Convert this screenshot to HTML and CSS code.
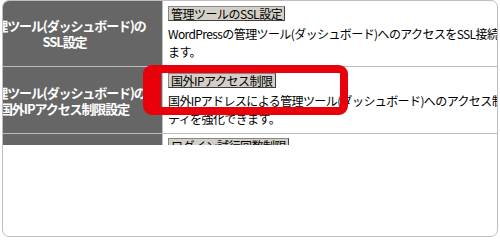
FILE: index.html
```html
<!DOCTYPE html>
<html lang="ja">
<head>
  <meta charset="UTF-8">
  <title>管理ツールのセキュリティ設定</title>
  <link rel="stylesheet" href="styles.css">
</head>
<body>
  <div class="frame">
    <div class="shot">
      <div class="settings">
        <div class="row row-ssl">
          <div class="label">管理ツール(ダッシュボード)の<br>SSL設定</div>
          <div class="field">
            <button type="button">管理ツールのSSL設定</button>
            <p>WordPressの管理ツール(ダッシュボード)へのアクセスをSSL接続にすることで、セキュリティを強化でき<br>ます。</p>
          </div>
        </div>
        <div class="row row-ip">
          <div class="label">管理ツール(ダッシュボード)の<br>国外IPアクセス制限設定</div>
          <div class="field">
            <button type="button">国外IPアクセス制限</button>
            <p>国外IPアドレスによる管理ツール(ダッシュボード)へのアクセス制限を行い、セキュリ<br>ティを強化できます。</p>
          </div>
        </div>
        <div class="row row-login">
          <div class="label"></div>
          <div class="field">
            <button type="button">ログイン試行回数制限</button>
          </div>
        </div>
      </div>
      <!-- red highlight drawn over the screenshot -->
      <div class="highlight"></div>
    </div>
  </div>
</body>
</html>
```

FILE: styles.css
```css
body {
  margin: 0;
  background: #fff;
  font-family: "Noto Sans CJK JP", sans-serif;
}
.frame {
  box-sizing: border-box;
  width: 496px;
  height: 237px;
  margin-left: 2px;
  border: 1px solid #c4bcbc;
  border-radius: 7px;
  overflow: hidden;
}
.shot {
  position: relative;
  height: 144px;
  overflow: hidden;
}
.settings {
  margin-left: -36px;
}
.row {
  display: flex;
  border-bottom: 1px solid #bdbdbd;
}
.row-ssl {
  height: 65px;
}
.row-ip {
  height: 66px;
}
.row-login {
  height: 40px;
}
.label {
  flex: none;
  width: 195px;
  display: flex;
  align-items: center;
  justify-content: center;
  background: #666;
  color: #fff;
  border-right: 1px solid #c0c0c0;
  font-size: 13px;
  font-weight: bold;
  line-height: 16px;
  letter-spacing: -1.1px;
  text-align: center;
}
.row-ip .label {
  padding-top: 2px;
}
.field {
  flex: 1;
  display: flex;
  flex-direction: column;
  align-items: flex-start;
  justify-content: center;
  padding-left: 5px;
}
.row-login .field {
  justify-content: flex-start;
  padding-top: 4px;
}
button {
  height: 15px;
  margin: 0 0 4px;
  padding: 0 2px;
  background: #d4d0c8;
  color: #000;
  border: 1px solid;
  border-color: #888 #404040 #404040 #888;
  font-family: inherit;
  font-size: 12px;
  line-height: 13px;
  letter-spacing: -0.5px;
}
.field p {
  margin: 0;
  color: #000;
  font-size: 12px;
  line-height: 18px;
  letter-spacing: -0.6px;
  white-space: nowrap;
}
.highlight {
  position: absolute;
  left: 140px;
  top: 64px;
  box-sizing: border-box;
  width: 205px;
  height: 50px;
  border: 8px solid #e8000a;
  border-left-width: 18px;
  border-radius: 9px;
}
```
